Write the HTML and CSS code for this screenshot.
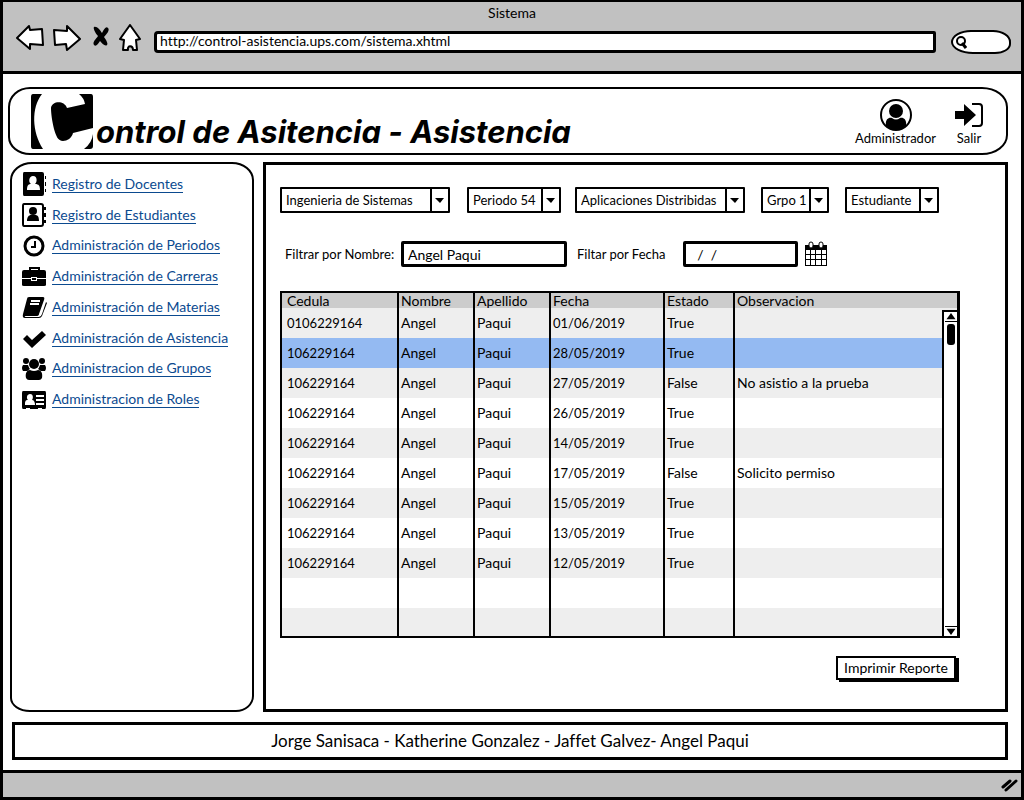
FILE: index.html
```html
<!DOCTYPE html>
<html lang="es">
<head>
<meta charset="utf-8">
<meta name="viewport" content="width=device-width, initial-scale=1">
<title>Sistema</title>
<link rel="stylesheet" href="styles.css">
</head>
<body>
<div class="window">
  <header class="chrome">
    <div class="chrome-title">Sistema</div>
    <div class="toolbar">
      <div class="nav-buttons">
        <button type="button" aria-label="Atrás"><svg width="30" height="28" viewBox="0 0 30 28"><path class="sketch" d="M2 14 14 2l1 4 12-1 1 16-13-1v5z"/></svg></button>
        <button type="button" aria-label="Adelante"><svg width="30" height="28" viewBox="0 0 30 28"><path class="sketch" d="M1 6l13 1V2l13 13-13 11-1-6-11 1z"/></svg></button>
        <button type="button" aria-label="Detener"><svg width="20" height="28" viewBox="0 0 20 28"><path d="M3 3c3-1 6 3 8 6 2-4 4-7 6-5s-1 6-4 9c3 4 4 7 3 8-2 2-5-2-7-4-2 3-4 6-6 4-2-3 2-6 4-9-3-3-5-8-4-9z"/></svg></button>
        <button type="button" aria-label="Inicio"><svg width="24" height="28" viewBox="0 0 24 28"><path class="sketch" d="M1 15 11 1l10 14-4 1 1 10h-4c0-5-6-5-5 0H4l1-10z"/></svg></button>
      </div>
      <input class="address" type="text" aria-label="Dirección" value="http://control-asistencia.ups.com/sistema.xhtml">
      <div class="search">
        <svg width="12" height="13" viewBox="0 0 12 13"><ellipse cx="6" cy="5" rx="4" ry="4" fill="none" stroke="#000" stroke-width="2"/><path d="M7 7l4 5" stroke="#000" stroke-width="3"/></svg>
        <input type="search" aria-label="Buscar">
      </div>
    </div>
  </header>

  <main class="page">
    <section class="banner">
      <svg class="logo" role="img" aria-label="C" width="64" height="56" viewBox="30 93 64 56"><path d="M33 94h9c-11 14-10 38 1 55H33q-2 0-2-3V97q0-3 2-3z"/><path d="M79 94H91q2 0 2 3V128L73 133C72 138 67 141 63 141 58 141 56 136 54 129 52 121 51 113 51 108 52 101 64 100 67 108L85 104Q84 98 79 94z"/><path d="M93 134v12q0 3-3 3h-6q8-6 9-15z"/></svg>
      <h1>ontrol de Asitencia - Asistencia</h1>
      <a class="action" href="#admin">
        <svg width="34" height="34" viewBox="0 0 34 34"><circle cx="17" cy="17" r="15" fill="#fff" stroke="#000" stroke-width="2"/><ellipse cx="17" cy="13" rx="7" ry="7"/><path d="M7 28c-1-6 2-9 6-8q4 3 8 0c4-1 7 2 6 8q-10 8-20 0z"/></svg>
        Administrador
      </a>
      <a class="action" href="#salir">
        <svg width="30" height="34" viewBox="0 0 30 34"><path d="M1 13h9V6l12 11-12 11v-7H1z"/><path d="M18 6h7q3 0 3 3v16q0 3-3 3h-7" fill="none" stroke="#000" stroke-width="2"/></svg>
        Salir
      </a>
    </section>

    <div class="columns">
      <nav class="sidebar" aria-label="Menú">
        <ul>
          <li><svg width="26" height="26" viewBox="0 0 26 26"><path d="M3 1h18q2 0 2 2v20q0 2-2 2H3q-1 0-1-2V3q0-2 1-2zM24 5h1v3h-1zM24 11h1v4h-1zM24 18h1v3h-1z"/><path fill="#fff" d="M12 5c5 0 4 7 2 8 4 0 5 2 5 6H6c0-4 1-6 4-6-3-2-2-8 2-8z"/></svg><a href="#docentes">Registro de Docentes</a></li>
          <li><svg width="26" height="26" viewBox="0 0 26 26"><path d="M3 2h17q2 0 2 2v18q0 2-2 2H3q-1 0-1-2V4q0-2 1-2z" fill="#fff" stroke="#000" stroke-width="2"/><circle cx="12" cy="9" r="4"/><path d="M6 19c0-4 2-6 4-6h4c3 0 4 2 4 6zM23 5h2v3h-2zM23 11h2v4h-2zM23 18h2v3h-2z"/></svg><a href="#estudiantes">Registro de Estudiantes</a></li>
          <li><svg width="26" height="26" viewBox="0 0 26 26"><circle cx="13" cy="13" r="9" fill="#fff" stroke="#000" stroke-width="3"/><path d="M14 8v6h-4" fill="none" stroke="#000" stroke-width="2"/></svg><a href="#periodos">Administración de Periodos</a></li>
          <li><svg width="26" height="26" viewBox="0 0 26 26"><path d="M9 7V4h9v3" fill="none" stroke="#000" stroke-width="2"/><path d="M1 14V8q0-2 2-2h20q2 0 2 2v6h-9v-1h-6v1zM1 15h9v2h6v-2h9v6q0 1-2 1H3q-2 0-2-1z"/><path d="M11 14h4v2h-4z"/></svg><a href="#carreras">Administración de Carreras</a></li>
          <li><svg width="26" height="26" viewBox="0 0 26 26"><path d="M8 3h14q2 0 1 3l-5 14q0 2-3 2H5q-2 0-1 1h14q2 0 3-3l4-12 1 1-5 13q-1 2-3 2H4q-3 0-2-4L6 5q0-2 2-2z"/><path d="M10 7h9M9 10h9" stroke="#fff" stroke-width="2"/></svg><a href="#materias">Administración de Materias</a></li>
          <li><svg width="26" height="26" viewBox="0 0 26 26"><path d="M2 14l4-4 5 5L21 6l4 4-14 13z"/></svg><a href="#asistencia">Administración de Asistencia</a></li>
          <li><svg width="26" height="26" viewBox="0 0 26 26"><circle cx="5" cy="5" r="3"/><circle cx="21" cy="5" r="3"/><circle cx="13" cy="8" r="5"/><path d="M2 9h5q1 3 2 4l-3 2H2q-2-3 0-6zM24 9h-5q-1 3-2 4l3 2h4q2-3 0-6zM5 22c-1-5 1-8 4-8q4 2 8 0c3 0 5 3 4 8q-1 2-3 2H8q-2 0-3-2z"/></svg><a href="#grupos">Administracion de Grupos</a></li>
          <li><svg width="26" height="26" viewBox="0 0 26 26"><path d="M2 4h22q1 0 1 2v14q0 2-1 2h-3v-1h-4v1H9v-1H5v1H2q-1 0-1-2V6q0-2 1-2z"/><path fill="#fff" d="M9 7c4 0 3 5 2 6 2 0 3 2 3 5H4c0-3 0-5 3-5-2-2-1-6 2-6zM15 8h8v2h-8zM15 12h8v2h-8zM15 16h8v2h-8z"/></svg><a href="#roles">Administracion de Roles</a></li>
        </ul>
      </nav>

      <section class="content">
        <div class="combos">
          <div class="combo combo-l"><select aria-label="Carrera"><option>Ingenieria de Sistemas</option></select><svg width="18" height="24" viewBox="0 0 18 24"><path d="M1 0v24" stroke="#000" stroke-width="2"/><path d="M5 10h9l-4 5z"/></svg></div>
          <div class="combo combo-m"><select aria-label="Periodo"><option>Periodo 54</option></select><svg width="18" height="24" viewBox="0 0 18 24"><path d="M1 0v24" stroke="#000" stroke-width="2"/><path d="M5 10h9l-4 5z"/></svg></div>
          <div class="combo combo-l"><select aria-label="Materia"><option>Aplicaciones Distribidas</option></select><svg width="18" height="24" viewBox="0 0 18 24"><path d="M1 0v24" stroke="#000" stroke-width="2"/><path d="M5 10h9l-4 5z"/></svg></div>
          <div class="combo combo-s"><select aria-label="Grupo"><option>Grpo 1</option></select><svg width="18" height="24" viewBox="0 0 18 24"><path d="M1 0v24" stroke="#000" stroke-width="2"/><path d="M5 10h9l-4 5z"/></svg></div>
          <div class="combo combo-m"><select aria-label="Rol"><option>Estudiante</option></select><svg width="18" height="24" viewBox="0 0 18 24"><path d="M1 0v24" stroke="#000" stroke-width="2"/><path d="M5 10h9l-4 5z"/></svg></div>
        </div>

        <div class="filters">
          <label for="nombre">Filtrar por Nombre:</label>
          <input id="nombre" class="field name" type="text" value="Angel Paqui">
          <label for="fecha">Filtar por Fecha</label>
          <input id="fecha" class="field date" type="text" value="  /  /">
          <button type="button" class="calendar" aria-label="Calendario"><svg width="24" height="26" viewBox="0 0 24 26"><path d="M1 4h22v21H1z"/><path fill="#fff" d="M2 9h4v4H2zM7 9h4v4H7zM12 9h5v4h-5zM18 9h4v4h-4zM2 14h4v4H2zM7 14h4v4H7zM12 14h5v4h-5zM18 14h4v4h-4zM2 19h4v5H2zM7 19h4v5H7zM12 19h5v5h-5zM18 19h4v5h-4z"/><rect x="5" y="1" width="4" height="6" rx="2" fill="#fff" stroke="#000"/><rect x="15" y="1" width="4" height="6" rx="2" fill="#fff" stroke="#000"/></svg></button>
        </div>

        <div class="grid">
          <table>
            <colgroup><col class="c1"><col class="c2"><col class="c2"><col class="c3"><col class="c4"><col></colgroup>
            <thead><tr><th>Cedula</th><th>Nombre</th><th>Apellido</th><th>Fecha</th><th>Estado</th><th>Observacion</th></tr></thead>
            <tbody>
              <tr><td class="num">0106229164</td><td>Angel</td><td>Paqui</td><td class="num">01/06/2019</td><td>True</td><td></td></tr>
              <tr class="selected"><td class="num">106229164</td><td>Angel</td><td>Paqui</td><td class="num">28/05/2019</td><td>True</td><td></td></tr>
              <tr><td class="num">106229164</td><td>Angel</td><td>Paqui</td><td class="num">27/05/2019</td><td>False</td><td>No asistio a la prueba</td></tr>
              <tr><td class="num">106229164</td><td>Angel</td><td>Paqui</td><td class="num">26/05/2019</td><td>True</td><td></td></tr>
              <tr><td class="num">106229164</td><td>Angel</td><td>Paqui</td><td class="num">14/05/2019</td><td>True</td><td></td></tr>
              <tr><td class="num">106229164</td><td>Angel</td><td>Paqui</td><td class="num">17/05/2019</td><td>False</td><td>Solicito permiso</td></tr>
              <tr><td class="num">106229164</td><td>Angel</td><td>Paqui</td><td class="num">15/05/2019</td><td>True</td><td></td></tr>
              <tr><td class="num">106229164</td><td>Angel</td><td>Paqui</td><td class="num">13/05/2019</td><td>True</td><td></td></tr>
              <tr><td class="num">106229164</td><td>Angel</td><td>Paqui</td><td class="num">12/05/2019</td><td>True</td><td></td></tr>
              <tr><td></td><td></td><td></td><td></td><td></td><td></td></tr>
              <tr class="last"><td></td><td></td><td></td><td></td><td></td><td></td></tr>
            </tbody>
          </table>
          <div class="scrollbar">
            <svg class="up" width="12" height="10" viewBox="0 0 12 10"><path d="M6 1l5 7H1z"/></svg>
            <div class="thumb"></div>
            <svg class="down" width="12" height="10" viewBox="0 0 12 10"><path d="M1 2h10L6 9z"/></svg>
          </div>
        </div>

        <button type="button" class="print">Imprimir Reporte</button>
      </section>
    </div>

    <footer class="credits">Jorge Sanisaca - Katherine Gonzalez - Jaffet Galvez- Angel Paqui</footer>
  </main>

  <div class="statusbar"><svg width="18" height="16" viewBox="0 0 18 16"><path d="M2 10l7-6M5 13L15 4" stroke="#000" stroke-width="3" stroke-linecap="round"/></svg></div>
</div>
</body>
</html>
```

FILE: styles.css
```css
* { box-sizing: border-box; }

body {
  margin: 0;
  background: #fff;
  color: #000;
  font: 14px/18px Lato, "Noto Sans", sans-serif;
  font-variant-ligatures: none;
}

button, input, select { font: inherit; font-variant-ligatures: none; color: inherit; }

button { padding: 0; border: 0; background: none; cursor: pointer; }

svg { display: block; flex: none; }

.sketch {
  fill: #fff;
  stroke: #000;
  stroke-width: 2;
  stroke-linejoin: round;
}

.window {
  display: flex;
  flex-direction: column;
  min-height: 100vh;
  border: solid #000;
  border-width: 2px 3px 3px;
}

.chrome {
  height: 72px;
  padding-top: 2px;
  border-bottom: 3px solid #000;
  background: #c1c1c1;
}

.chrome-title { text-align: center; }

.toolbar {
  display: flex;
  align-items: center;
  padding: 0 10px 0 12px;
}

.nav-buttons {
  display: flex;
  align-items: center;
  gap: 8px;
  margin-right: 11px;
}

.address {
  flex: 1;
  min-width: 0;
  height: 22px;
  margin: 8px 15px 0 0;
  padding: 0 3px 3px;
  border: 3px solid #000;
  border-radius: 4px 2px 3px 4px;
  background: #fff;
  line-height: 14px;
}

.search {
  display: flex;
  align-items: center;
  width: 60px;
  height: 24px;
  margin-top: 8px;
  padding-left: 2px;
  border: 2px solid #000;
  border-radius: 20px 18px 16px 22px / 12px 12px 10px 12px;
  background: #fff;
}

.search input {
  width: 100%;
  min-width: 0;
  border: 0;
  background: none;
  outline: 0;
}

.page {
  flex: 1;
  display: flex;
  flex-direction: column;
  gap: 7px;
  padding: 13px 13px 10px 5px;
}

.banner {
  display: flex;
  align-items: center;
  height: 68px;
  padding: 0 22px 0 20px;
  border: 2px solid #000;
  border-radius: 22px 26px 26px 22px / 20px 20px 20px 18px;
}

.banner h1 {
  flex: 1;
  margin: 22px 0 0 2px;
  font-family: Inter, "Noto Sans", sans-serif;
  font-size: 31px;
  line-height: 36px;
  font-style: italic;
  font-weight: 700;
  white-space: nowrap;
}

.action {
  display: flex;
  flex-direction: column;
  align-items: center;
  margin-left: 18px;
  color: #000;
  font-size: 13px;
  line-height: 12px;
  text-decoration: none;
}

.columns {
  flex: 1;
  display: grid;
  grid-template-columns: 244px 1fr;
  gap: 9px;
  padding-left: 2px;
}

.sidebar {
  padding: 5px 0 0 9px;
  border: 2px solid #000;
  border-radius: 22px 22px 18px 20px / 18px 18px 16px 14px;
}

.sidebar ul {
  display: grid;
  grid-auto-rows: 1fr;
  height: 246px;
  margin: 0;
  padding: 0;
  list-style: none;
}

.sidebar li {
  display: flex;
  align-items: center;
  gap: 5px;
}

.sidebar a {
  border-bottom: 1px solid #0b4a8f;
  color: #0b4a8f;
  line-height: 16px;
  text-decoration: none;
}

.content {
  display: flex;
  flex-direction: column;
  padding: 22px 45px 24px 14px;
  border: 3px solid #000;
}

.combos {
  display: grid;
  grid-template-columns: 187px 108px 186px 84px 94px;
  font-size: 13px;
}

.combo { display: grid; }
.combo-l { width: 170px; }
.combo-m { width: 94px; }
.combo-s { width: 68px; }

.combo select,
.combo svg { grid-area: 1 / 1; }

.combo select {
  height: 26px;
  padding: 0 0 0 4px;
  appearance: none;
  border: 2px solid #000;
  border-radius: 1px;
  background: #fff;
}

.combo svg {
  justify-self: end;
  align-self: center;
  margin-right: 2px;
  pointer-events: none;
}

.filters {
  display: flex;
  align-items: center;
  margin-top: 28px;
  padding-left: 5px;
  white-space: nowrap;
}

.filters label { width: 106px; font-size: 13px; }

.field {
  height: 26px;
  padding: 0 4px;
  border: 3px solid #000;
  border-radius: 2px;
  background: #fff;
}

.filters .name { width: 166px; margin: 0 10px; }
.filters .date { width: 115px; }
.calendar { margin-left: 6px; }

.grid {
  position: relative;
  margin-top: 24px;
  border: 2px solid #000;
  border-right-width: 3px;
}

.grid table {
  width: 100%;
  table-layout: fixed;
  border-collapse: separate;
  border-spacing: 0;
}

.c1 { width: 117px; }
.c2 { width: 76px; }
.c3 { width: 114px; }
.c4 { width: 70px; }

.grid th,
.grid td {
  padding: 0 2px;
  border-right: 2px solid #000;
  text-align: left;
  font-weight: 400;
}

.grid th:first-child,
.grid td:first-child { padding-left: 5px; }

.grid th:last-child,
.grid td:last-child { border-right: 0; }

.grid th { height: 15px; line-height: 15px; background: #ccc; }
.grid td { height: 30px; }
.grid .num { font-size: 13px; }
.grid .last td { height: 28px; }
.grid tbody tr:nth-child(odd) { background: #eee; }
.grid tbody .selected { background: #94baf2; }

.scrollbar {
  position: absolute;
  top: 17px;
  right: 0;
  bottom: 0;
  display: flex;
  flex-direction: column;
  align-items: center;
  width: 15px;
  border-left: 2px solid #000;
  border-top: 2px solid #000;
  background: #fff;
}

.scrollbar .up { border-bottom: 1px solid #000; }
.scrollbar .down { margin-top: auto; border-top: 1px solid #000; }

.thumb {
  width: 8px;
  height: 21px;
  margin-top: 2px;
  border-radius: 3px;
  background: #000;
}

.print {
  align-self: flex-end;
  width: 120px;
  height: 24px;
  margin: 18px 4px 0 0;
  border: 2px solid #000;
  background: #fff;
  box-shadow: 3px 2px 0 #000;
}

.credits {
  height: 38px;
  margin: 3px 0 0 4px;
  border: 3px solid #000;
  text-align: center;
  font-size: 17px;
  line-height: 32px;
}

.statusbar {
  display: flex;
  align-items: center;
  justify-content: flex-end;
  height: 27px;
  padding-right: 2px;
  border-top: 3px solid #000;
  background: #c1c1c1;
}
```
